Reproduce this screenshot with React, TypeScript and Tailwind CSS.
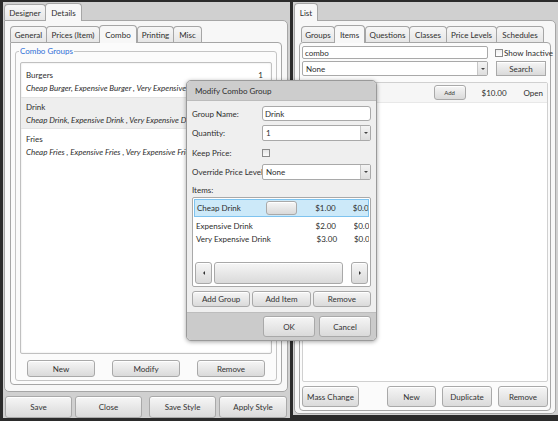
import React from 'react';

const font = { fontFamily: 'Lato, "Open Sans", "Noto Sans", sans-serif' };

function Btn({ children, className = '' }: { children: React.ReactNode; className?: string }) {
  return (
    <div
      className={`flex items-center justify-center whitespace-nowrap rounded-[3px] border border-[#a9a9a9] bg-gradient-to-b from-[#f6f6f6] to-[#dadada] text-[#333] shadow-[inset_0_1px_0_#fff] ${className}`}
    >
      {children}
    </div>
  );
}

function Tab({ label, active, className = '' }: { label: string; active?: boolean; className?: string }) {
  return (
    <div
      className={`flex items-center justify-center whitespace-nowrap rounded-t-[4px] border border-b-0 border-[#a6a6a6] ${
        active ? 'z-10 -mb-px h-[18px] bg-[#f7f7f7]' : '-mr-px h-[16px] bg-gradient-to-b from-[#f7f7f7] to-[#e6e6e6]'
      } ${className}`}
    >
      {label}
    </div>
  );
}

function Combo({ value, className = '' }: { value: string; className?: string }) {
  return (
    <div className={`flex items-center rounded-[2px] border border-[#a9a9a9] bg-white pl-[3px] ${className}`}>
      <span className="flex-1">{value}</span>
      <div className="flex h-full w-[10px] items-center justify-center border-l border-[#c6c6c6] bg-gradient-to-b from-[#f4f4f4] to-[#dedede]">
        <div className="h-0 w-0 border-x-[2px] border-t-[2px] border-x-transparent border-t-[#444]" />
      </div>
    </div>
  );
}

function LeftPanel() {
  const groups = [
    { name: 'Burgers', qty: '1', items: 'Cheap Burger, Expensive Burger , Very Expensive Burger', sel: false },
    { name: 'Drink', qty: '1', items: 'Cheap Drink, Expensive Drink , Very Expensive Drink', sel: true },
    { name: 'Fries', qty: '1', items: 'Cheap Fries , Expensive Fries , Very Expensive Fries', sel: false },
  ];
  return (
    <div className="flex h-[416px] w-[287px] flex-col bg-[#d0d0d0] pt-px">
      <div className="flex h-[17px] items-end pl-px">
        <Tab label="Designer" className="w-[42px]" />
        <Tab label="Details" active className="w-[37px]" />
      </div>
      <div className="ml-px mr-[2px] flex h-[372px] flex-col rounded-[5px] rounded-tl-none border border-[#a6a6a6] bg-[#f7f7f7] px-[5px] pb-[6px] pt-[3px]">
        <div className="flex h-[18px] items-end">
          <Tab label="General" className="w-[37px]" />
          <Tab label="Prices (Item)" className="w-[54px]" />
          <Tab label="Combo" active className="w-[38px]" />
          <Tab label="Printing" className="w-[37px]" />
          <Tab label="Misc" className="w-[29px]" />
        </div>
        <div className="flex flex-1 flex-col rounded-[4px] rounded-tl-none border border-[#a6a6a6] bg-[#fbfbfb] px-[4px] pb-[3px] pt-[8px]">
          <div className="relative flex flex-1 flex-col rounded-[3px] border border-[#c4c4c4] px-[4px] pb-[3px] pt-[10px]">
            <span className="absolute -top-[5px] left-[3px] bg-[#fbfbfb] px-[1px] text-[#2f6fd6]">Combo Groups</span>
            <div className="flex flex-1 flex-col rounded-[2px] border border-[#c0c0c0] bg-white pt-[2px] shadow-[inset_0_0_2px_#ddd]">
              {groups.map((g) => (
                <div
                  key={g.name}
                  className={`flex h-[32px] flex-col justify-center gap-[5px] pl-[5px] pr-[8px] ${
                    g.sel ? 'border-y border-[#e3e3e3] bg-[#eeeeee]' : ''
                  }`}
                >
                  <div className="flex justify-between">
                    <span>{g.name}</span>
                    <span>{g.qty}</span>
                  </div>
                  <span className="whitespace-nowrap italic">{g.items}</span>
                </div>
              ))}
            </div>
            <div className="mt-[6px] flex justify-between px-[7px]">
              <Btn className="h-[17px] w-[68px]">New</Btn>
              <Btn className="h-[17px] w-[68px]">Modify</Btn>
              <Btn className="h-[17px] w-[68px]">Remove</Btn>
            </div>
          </div>
        </div>
      </div>
      <div className="mt-[4px] flex gap-[3px] px-[2px]">
        <Btn className="h-[22px] w-[67px]">Save</Btn>
        <Btn className="h-[22px] w-[67px]">Close</Btn>
        <Btn className="ml-[4px] h-[22px] w-[67px]">Save Style</Btn>
        <Btn className="h-[22px] w-[68px]">Apply Style</Btn>
      </div>
    </div>
  );
}

function RightPanel() {
  return (
    <div className="flex h-[413px] w-[265px] flex-col bg-[#d0d0d0] pt-px">
      <div className="flex h-[17px] items-end pl-px">
        <Tab label="List" active className="w-[24px]" />
      </div>
      <div className="ml-px mr-[2px] flex h-[394px] flex-col rounded-[5px] rounded-tl-none border border-[#a6a6a6] bg-[#f7f7f7] px-[4px] pt-[3px]">
        <div className="flex h-[18px] items-end pl-[2px]">
          <Tab label="Groups" className="w-[34px]" />
          <Tab label="Items" active className="w-[31px]" />
          <Tab label="Questions" className="w-[45px]" />
          <Tab label="Classes" className="w-[38px]" />
          <Tab label="Price Levels" className="w-[51px]" />
          <Tab label="Schedules" className="w-[48px]" />
        </div>
        <div className="mb-[2px] flex flex-1 flex-col rounded-[4px] border border-[#a6a6a6] bg-[#fbfbfb] px-[2px] pb-[3px] pt-[3px]">
          <div className="flex gap-[5px]">
            <div className="flex flex-1 flex-col gap-[2px]">
              <div className="flex h-[13px] items-center rounded-[2px] border border-[#a9a9a9] bg-white pl-[2px]">combo</div>
              <Combo value="None" className="h-[15px]" />
            </div>
            <div className="flex w-[55px] flex-col gap-[2px]">
              <div className="flex h-[13px] items-center gap-[1px] whitespace-nowrap pl-[2px]">
                <div className="h-[8px] w-[8px] shrink-0 border border-[#8a8a8a] bg-gradient-to-b from-[#eee] to-[#fff]" />
                <span>Show Inactive</span>
              </div>
              <Btn className="ml-[3px] h-[15px] w-[50px] rounded-none">Search</Btn>
            </div>
          </div>
          <div className="mt-[6px] flex flex-1 flex-col rounded-[2px] border border-[#d0d0d0] bg-white">
            <div className="flex h-[20px] items-center border-b border-[#e8e8e8] bg-[#f6f6f6] pr-[4px]">
              <div className="flex-1" />
              <Btn className="mr-[16px] h-[15px] w-[32px] text-[6px]">Add</Btn>
              <span className="w-[42px]">$10.00</span>
              <span>Open</span>
            </div>
          </div>
          <div className="mt-[4px] flex gap-[6px]">
            <Btn className="h-[21px] w-[57px]">Mass Change</Btn>
            <div className="flex-1" />
            <Btn className="h-[21px] w-[49px]">New</Btn>
            <Btn className="h-[21px] w-[50px]">Duplicate</Btn>
            <Btn className="h-[21px] w-[50px]">Remove</Btn>
          </div>
        </div>
      </div>
    </div>
  );
}

function Modal() {
  const rows = [
    { name: 'Cheap Drink', price: '$1.00', sel: true },
    { name: 'Expensive Drink', price: '$2.00', sel: false },
    { name: 'Very Expensive Drink', price: '$3.00', sel: false },
  ];
  return (
    <div className="absolute left-[186px] top-[80px] flex h-[261px] w-[191px] flex-col overflow-hidden rounded-[5px] border border-[#9a9a9a] bg-[#efefef] shadow-[0_1px_4px_rgba(0,0,0,0.35)]">
      <div className="flex h-[20px] items-center border-b border-[#bcbcbc] bg-[#cdcdcd] pl-[8px]">Modify Combo Group</div>
      <div className="flex flex-1 flex-col px-[5px] pt-[5px]">
        <div className="flex h-[15px] items-center">
          <span className="w-[70px] shrink-0">Group Name:</span>
          <div className="flex h-[15px] flex-1 items-center rounded-[3px] border border-[#a9a9a9] bg-white pl-[2px]">Drink</div>
        </div>
        <div className="mt-[4px] flex h-[16px] items-center">
          <span className="w-[70px] shrink-0">Quantity:</span>
          <Combo value="1" className="h-[16px] flex-1" />
        </div>
        <div className="mt-[4px] flex h-[15px] items-center">
          <span className="w-[70px] shrink-0">Keep Price:</span>
          <div className="h-[8px] w-[8px] border border-[#8a8a8a] bg-gradient-to-b from-[#e4e4e4] to-[#fafafa]" />
        </div>
        <div className="mt-[4px] flex h-[16px] items-center">
          <span className="w-[70px] shrink-0 whitespace-nowrap">Override Price Level:</span>
          <Combo value="None" className="h-[16px] flex-1" />
        </div>
        <div className="mt-[6px]">Items:</div>
        <div className="mt-[3px] flex h-[90px] flex-col rounded-[2px] border border-[#a9a9a9] bg-white p-px">
          {rows.map((r) => (
            <div
              key={r.name}
              className={`flex items-center whitespace-nowrap pl-[2px] ${
                r.sel ? 'mb-[2px] h-[18px] border border-[#7ec3ef] bg-[#cce9f9]' : 'h-[13px]'
              }`}
            >
              <span className="w-[72px]">{r.name}</span>
              {r.sel ? <Btn className="h-[14px] w-[32px]"> </Btn> : <span className="w-[32px]" />}
              <span className="ml-[18px] w-[39px]">{r.price}</span>
              <span className="overflow-hidden">$0.0</span>
            </div>
          ))}
          <div className="flex-1" />
          <div className="flex h-[23px] items-stretch gap-[2px] px-[1px] pb-px">
            <Btn className="w-[17px] rounded-[2px]">
              <div className="h-0 w-0 border-y-[2px] border-r-[2px] border-y-transparent border-r-[#333]" />
            </Btn>
            <Btn className="flex-1 rounded-[2px]"> </Btn>
            <div className="w-[4px]" />
            <Btn className="w-[17px] rounded-[2px]">
              <div className="h-0 w-0 border-y-[2px] border-l-[2px] border-y-transparent border-l-[#333]" />
            </Btn>
          </div>
        </div>
        <div className="mt-[4px] flex gap-[2px]">
          <Btn className="h-[16px] flex-1">Add Group</Btn>
          <Btn className="h-[16px] flex-1">Add Item</Btn>
          <Btn className="h-[16px] flex-1">Remove</Btn>
        </div>
      </div>
      <div className="mt-[3px] flex h-[28px] items-center justify-end gap-[4px] border-t border-[#bdbdbd] bg-[#cbcbcb] pr-[5px]">
        <Btn className="h-[21px] w-[52px]">OK</Btn>
        <Btn className="h-[21px] w-[52px]">Cancel</Btn>
      </div>
    </div>
  );
}

export default function App() {
  return (
    <div
      className="relative flex h-[421px] w-[558px] items-start gap-[3px] overflow-hidden bg-[#2b2b2b] pl-[3px] pt-[2px] text-[8px] leading-none text-[#2e2e2e]"
      style={font}
    >
      <LeftPanel />
      <RightPanel />
      <Modal />
    </div>
  );
}
